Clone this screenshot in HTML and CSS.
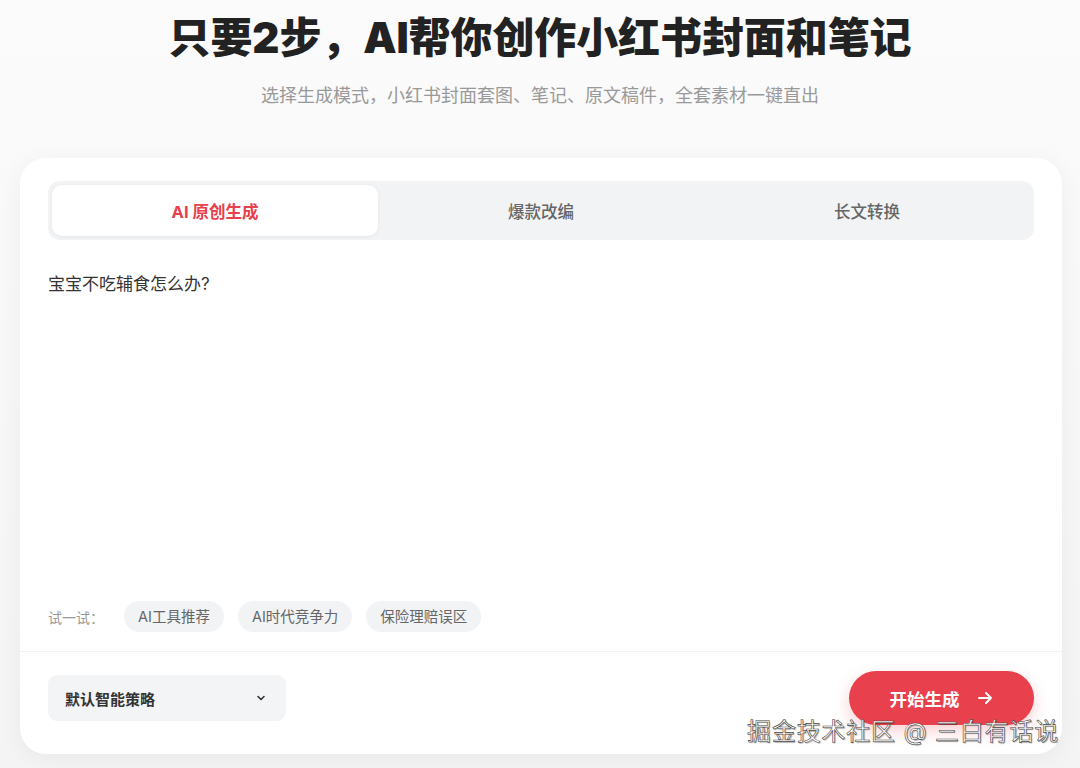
FILE: index.html
```html
<!DOCTYPE html>
<html lang="zh-CN">
<head>
  <meta charset="UTF-8">
  <meta name="viewport" content="width=device-width, initial-scale=1.0">
  <title>小红书封面和笔记</title>
  <link rel="stylesheet" href="styles.css">
</head>
<body>
  <header class="hero">
    <h1>只要2步，AI帮你创作小红书封面和笔记</h1>
    <p class="subtitle">选择生成模式，小红书封面套图、笔记、原文稿件，全套素材一键直出</p>
  </header>

  <div class="card">
    <div class="card-body">
      <div class="tabs">
        <div class="tab active">AI 原创生成</div>
        <div class="tab">爆款改编</div>
        <div class="tab">长文转换</div>
      </div>

      <div class="editor">宝宝不吃辅食怎么办?</div>

      <div class="try-row">
        <span class="try-label">试一试：</span>
        <span class="chip">AI工具推荐</span>
        <span class="chip">AI时代竞争力</span>
        <span class="chip">保险理赔误区</span>
      </div>
    </div>

    <div class="card-footer">
      <div class="select">
        <span>默认智能策略</span>
        <svg width="12" height="12" viewBox="0 0 12 12" fill="none" stroke="#333" stroke-width="1.6" stroke-linecap="round" stroke-linejoin="round"><path d="M3 4.5 6 7.5 9 4.5"/></svg>
      </div>
      <button class="btn-start">
        开始生成
        <svg width="18" height="18" viewBox="0 0 18 18" fill="none" stroke="#fff" stroke-width="2" stroke-linecap="round" stroke-linejoin="round"><path d="M3 9h12M10 4l5 5-5 5"/></svg>
      </button>
    </div>

    <div class="watermark">掘金技术社区 @ 三白有话说</div>
  </div>
</body>
</html>
```

FILE: styles.css
```css
:root {
  --bg-page: #f6f6f6;
  --bg-soft: #f1f3f5;
  --text-main: #222;
  --text-body: #333;
  --text-muted: #999;
  --text-tab: #666;
  --accent: #e8404c;
  --line: #f2f2f2;
}

* {
  box-sizing: border-box;
  margin: 0;
  padding: 0;
}

body {
  font-family: "Inter", "Noto Sans CJK SC", sans-serif;
  background: linear-gradient(#fbfbfb, #f4f4f4);
  color: var(--text-body);
  height: 768px;
  overflow: hidden;
}

.hero {
  text-align: center;
  padding-top: 10px;
}

.hero h1 {
  font-size: 42px;
  line-height: 56px;
  font-weight: 900;
  color: var(--text-main);
  letter-spacing: -0.1px;
}

.subtitle {
  margin-top: 18px;
  font-size: 18px;
  line-height: 24px;
  color: var(--text-muted);
}

.card {
  position: relative;
  margin: 50px 18px 0 20px;
  background: #fff;
  border-radius: 26px;
  box-shadow: 0 4px 24px rgba(0, 0, 0, 0.05);
}

.card-body {
  padding: 23px 28px 19px;
}

.tabs {
  display: grid;
  grid-template-columns: repeat(3, 1fr);
  background: var(--bg-soft);
  border-radius: 12px;
  padding: 4px;
  height: 59px;
}

.tab {
  display: flex;
  align-items: center;
  justify-content: center;
  border-radius: 10px;
  font-size: 16.5px;
  font-weight: 500;
  color: var(--text-tab);
}

.tab.active {
  background: #fff;
  color: var(--accent);
  font-weight: 700;
  box-shadow: 0 1px 4px rgba(0, 0, 0, 0.06);
}

.editor {
  margin-top: 24px;
  height: 321px;
  font-size: 17px;
  line-height: 40px;
  color: var(--text-body);
}

.try-row {
  margin-top: 16px;
  display: flex;
  align-items: center;
  gap: 14px;
  font-size: 14.5px;
}

.try-label {
  color: var(--text-muted);
  width: 62px;
  font-size: 14px;
}

.chip {
  background: var(--bg-soft);
  color: var(--text-tab);
  border-radius: 16px;
  height: 31px;
  line-height: 31px;
  padding: 0 14px;
}

.card-footer {
  border-top: 1px solid var(--line);
  padding: 19px 28px 29px;
  display: flex;
  align-items: center;
  justify-content: space-between;
}

.select {
  width: 238px;
  height: 46px;
  background: #f3f4f6;
  border-radius: 9px;
  padding: 0 19px 0 17px;
  display: flex;
  align-items: center;
  justify-content: space-between;
  font-size: 15px;
  font-weight: 700;
  color: var(--text-body);
}

.btn-start {
  width: 185px;
  height: 54px;
  border: none;
  border-radius: 27px;
  background: var(--accent);
  color: #fff;
  font-family: inherit;
  font-size: 17.5px;
  font-weight: 700;
  display: flex;
  align-items: center;
  justify-content: center;
  gap: 16px;
  box-shadow: 0 6px 16px rgba(232, 64, 76, 0.25);
}

.watermark {
  position: absolute;
  right: 3px;
  bottom: 7px;
  font-size: 24px;
  line-height: 30px;
  color: #fff;
  -webkit-text-stroke: 0.6px #444;
  text-shadow: 1px 1px 1px rgba(0, 0, 0, 0.35);
  letter-spacing: 0.8px;
}
```
